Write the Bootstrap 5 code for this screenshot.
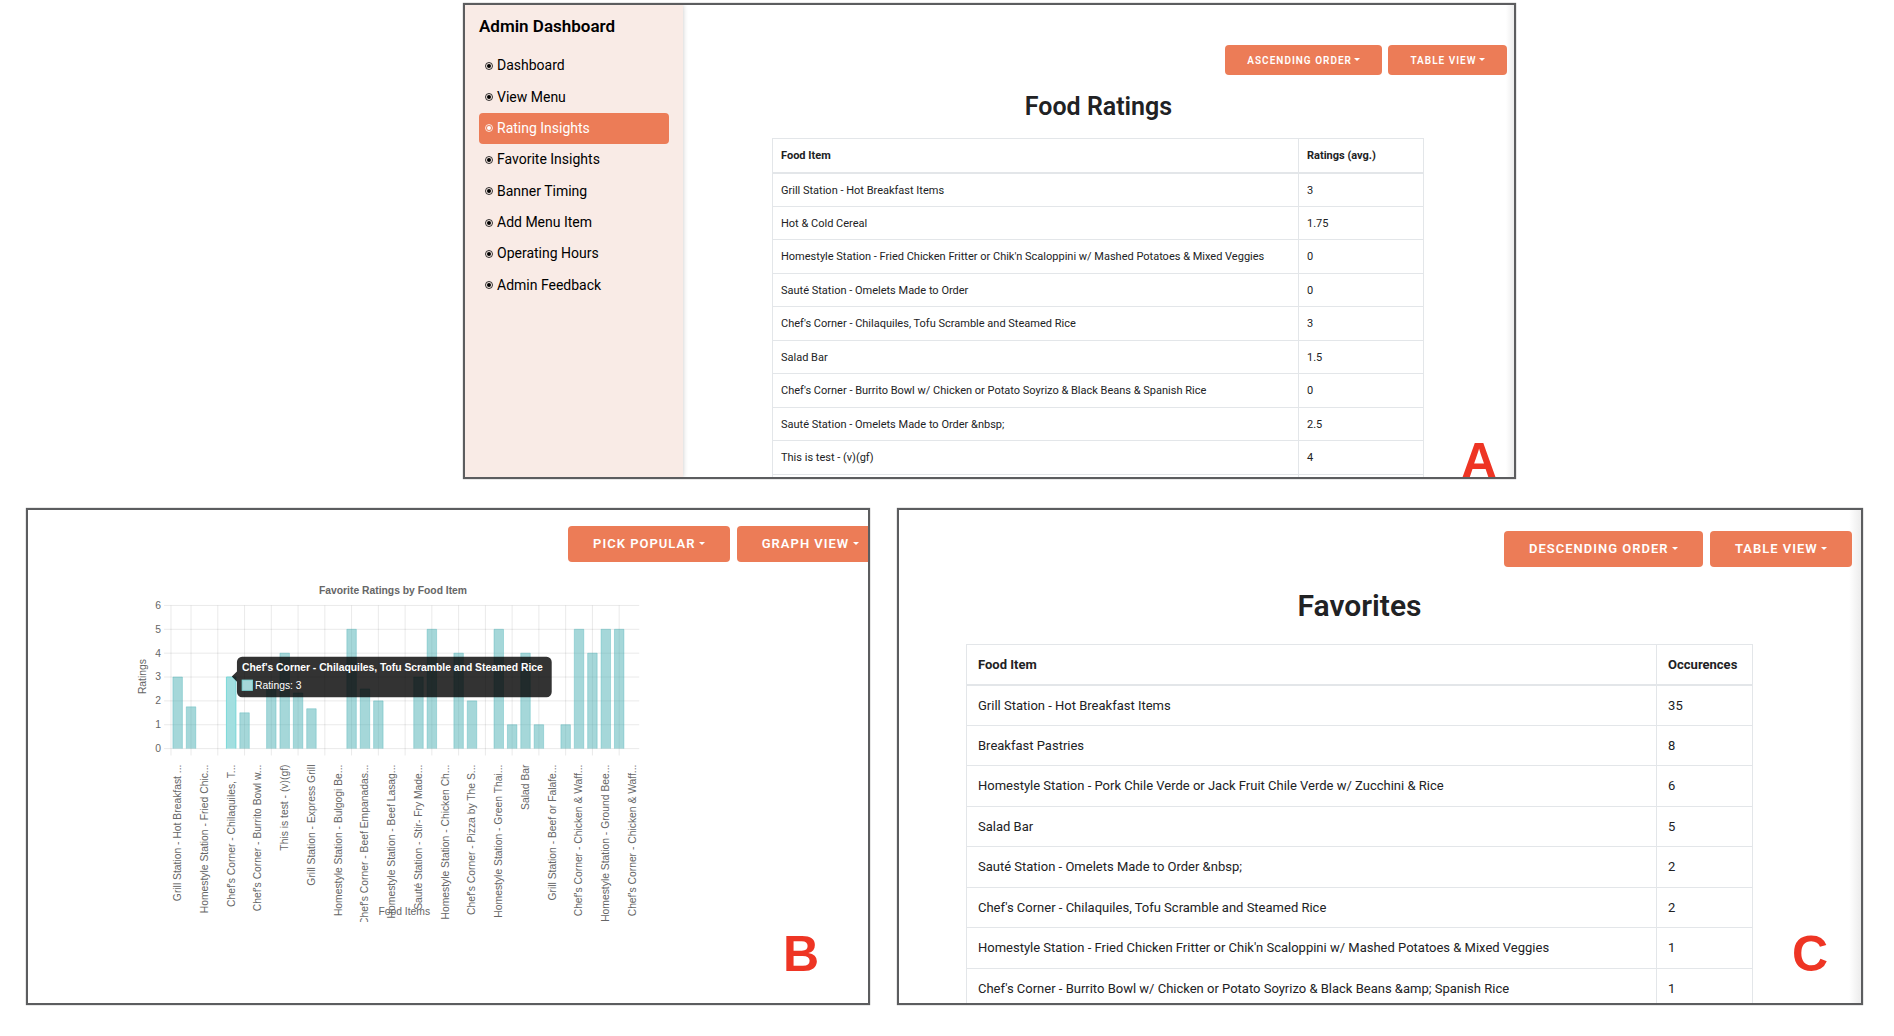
<!DOCTYPE html>
<html lang="en">
<head>
<meta charset="utf-8">
<meta name="viewport" content="width=device-width, initial-scale=1">
<title>Admin Dashboard</title>
<link href="https://cdn.jsdelivr.net/npm/bootstrap@5.3.0/dist/css/bootstrap.min.css" rel="stylesheet">
<style>
  :root { --coral: #ec7c57; --ink: #212224; --rule: #e3e6e9; }
  body { font-family: Roboto, "Liberation Sans", sans-serif; color: var(--ink); background: #fff; }
  .board { padding-top: 3px; padding-bottom: 31px; }
  .board-top { display: grid; grid-template-columns: 463fr 1053fr 378fr; }
  .board-top > .shot { grid-column: 2; height: 476px; }
  .board-bottom { display: grid; grid-template-columns: 26fr 844fr 27fr 966fr 31fr; margin-top: 29px; }
  .board-bottom > .shot { height: 497px; }
  .board-bottom > .shot-graph { grid-column: 2; }
  .board-bottom > .shot-favorites { grid-column: 4; }
  .shot { position: relative; overflow: hidden; border: 2px solid #5c5d5f; box-shadow: 0 0 1px #777; background: #fff; }
  .shot-letter { position: absolute; font: bold 50px/50px "Liberation Sans", sans-serif; color: #ee3524; }
  .letter-a { right: 17px; top: 431px; }
  .letter-b { right: 49px; bottom: 24px; }
  .letter-c { right: 33px; bottom: 24px; }

  .side { flex: 0 0 218px; padding: 11px 14px; background: #f9ebe6; box-shadow: 0 0 5px rgba(0,0,0,.22); z-index: 1; }
  .side h1 { font-size: 17px; line-height: 20px; font-weight: 600; color: #000; margin: 0 0 14px; white-space: nowrap; }
  .side ul { height: 251px; }
  .side .nav-link { display: flex; align-items: center; gap: 4px; padding: 0 6px; font-size: 14px; color: #000; border-radius: 4px; }
  .side .nav-link.active { background: var(--coral); color: #fff; }
  .side svg { width: 8px; height: 8px; flex: none; }

  .btn-coral { --bs-btn-color: #fff; --bs-btn-bg: var(--coral); --bs-btn-hover-color: #fff; --bs-btn-hover-bg: #e06c46;
    --bs-btn-active-color: #fff; --bs-btn-active-bg: #d9633c; border: 0; border-radius: 4px; font-weight: 600;
    letter-spacing: 1px; text-transform: uppercase; white-space: nowrap; }
  .btn-small { padding: 0 22px; height: 30px; font-size: 10px; }
  .btn-large { padding: 0 25px; height: 36px; font-size: 13px; }

  .report-title { text-align: center; font-weight: 600; }
  .report { width: 100%; margin: 0; color: var(--ink); border-color: var(--rule); table-layout: fixed; white-space: nowrap; }
  .report > :not(caption) > * > * { padding-top: 0; padding-bottom: 0; vertical-align: middle; }
  .report thead { border-bottom: 2px solid var(--rule); }

  .ratings-main { flex: 1 1 0; min-width: 0; padding-top: 40px; background: linear-gradient(to left, #ececec, #fff 8px); }
  .ratings-main .toolbar { padding-right: 7px; }
  .ratings-main .report-wrap { padding: 0 90px 0 89px; }
  .ratings-main .report-title { font-size: 25px; line-height: 31px; margin: 16px 0; }
  .report-ratings { font-size: 11px; }
  .report-ratings tr { height: 34px; }
  .report-ratings tbody tr:nth-child(even) { height: 33px; }
  .report-ratings th:last-child { width: 19.2%; }
  .report-ratings > :not(caption) > * > * { padding: 2px 8px 0; }

  .shot-favorites { padding-top: 21px; background: linear-gradient(to left, #ececec, #fff 12px); }
  .shot-favorites .toolbar { padding-right: 9px; }
  .shot-favorites .report-wrap { padding: 0 108px 0 67px; }
  .shot-favorites .report-title { font-size: 30px; line-height: 37px; margin: 20px 0; }
  .report-favorites { font-size: 13px; }
  .report-favorites tr { height: 41px; }
  .report-favorites thead tr, .report-favorites tbody tr:nth-child(even) { height: 40px; }
  .report-favorites th:last-child { width: 12.2%; }
  .report-favorites > :not(caption) > * > * { padding-left: 11px; padding-right: 10px; }

  .shot-graph { padding-top: 16px; }
  .shot-graph .toolbar { margin-left: 64.3%; }
  .chart { display: block; width: 61.6%; margin: 18px 0 0 12.1%; overflow: hidden; font: 12px "Liberation Sans", sans-serif; fill: #666; }
  .chart .strong { font-weight: bold; }
  .chart .grid { stroke: rgba(0,0,0,.1); stroke-width: 1; }
  .chart .bar { fill: rgba(75,176,180,.5); }
  .chart .bar-edge { stroke: rgba(75,180,184,.45); stroke-width: 1; fill: none; }
  .chart .hot { fill: #a2dfe0; }
  .chart .hot-edge { stroke: #6cd5d5; }
  .chart .tip { fill: rgba(0,0,0,.8); }
  .chart .tip-text { fill: #fff; }
</style>
</head>
<body>
<main class="board">
  <div class="board-top">
    <section class="shot d-flex" aria-label="Food Ratings table">
      <aside class="side">
        <h1>Admin Dashboard</h1>
        <ul class="nav flex-column flex-nowrap" id="menu"></ul>
      </aside>
      <div class="ratings-main">
        <div class="toolbar d-flex justify-content-end" style="gap:6px">
          <button type="button" class="btn btn-coral btn-small dropdown-toggle">Ascending Order</button>
          <button type="button" class="btn btn-coral btn-small dropdown-toggle">Table View</button>
        </div>
        <h2 class="report-title">Food Ratings</h2>
        <div class="report-wrap">
          <table class="table table-bordered report report-ratings">
            <thead><tr><th scope="col">Food Item</th><th scope="col">Ratings (avg.)</th></tr></thead>
            <tbody>
              <tr><td>Grill Station - Hot Breakfast Items</td><td>3</td></tr>
              <tr><td>Hot &amp; Cold Cereal</td><td>1.75</td></tr>
              <tr><td>Homestyle Station - Fried Chicken Fritter or Chik'n Scaloppini w/ Mashed Potatoes &amp; Mixed Veggies</td><td>0</td></tr>
              <tr><td>Sauté Station - Omelets Made to Order</td><td>0</td></tr>
              <tr><td>Chef's Corner - Chilaquiles, Tofu Scramble and Steamed Rice</td><td>3</td></tr>
              <tr><td>Salad Bar</td><td>1.5</td></tr>
              <tr><td>Chef's Corner - Burrito Bowl w/ Chicken or Potato Soyrizo &amp; Black Beans &amp; Spanish Rice</td><td>0</td></tr>
              <tr><td>Sauté Station - Omelets Made to Order &amp;nbsp;</td><td>2.5</td></tr>
              <tr><td>This is test - (v)(gf)</td><td>4</td></tr>
              <tr><td></td><td></td></tr>
            </tbody>
          </table>
        </div>
      </div>
      <span class="shot-letter letter-a">A</span>
    </section>
  </div>

  <div class="board-bottom">
    <section class="shot shot-graph" aria-label="Favorite ratings graph">
      <div class="toolbar d-flex flex-nowrap" style="gap:7px">
        <button type="button" class="btn btn-coral btn-large dropdown-toggle">Pick Popular</button>
        <button type="button" class="btn btn-coral btn-large dropdown-toggle">Graph View</button>
      </div>
      <svg class="chart" id="chart" viewBox="0 0 600 396" role="img" aria-label="Favorite Ratings by Food Item"></svg>
      <span class="shot-letter letter-b">B</span>
    </section>

    <section class="shot shot-favorites" aria-label="Favorites table">
      <div class="toolbar d-flex justify-content-end" style="gap:7px">
        <button type="button" class="btn btn-coral btn-large dropdown-toggle">Descending Order</button>
        <button type="button" class="btn btn-coral btn-large dropdown-toggle">Table View</button>
      </div>
      <div class="report-wrap">
        <h2 class="report-title">Favorites</h2>
        <table class="table table-bordered report report-favorites">
          <thead><tr><th scope="col">Food Item</th><th scope="col">Occurences</th></tr></thead>
          <tbody>
            <tr><td>Grill Station - Hot Breakfast Items</td><td>35</td></tr>
            <tr><td>Breakfast Pastries</td><td>8</td></tr>
            <tr><td>Homestyle Station - Pork Chile Verde or Jack Fruit Chile Verde w/ Zucchini &amp; Rice</td><td>6</td></tr>
            <tr><td>Salad Bar</td><td>5</td></tr>
            <tr><td>Sauté Station - Omelets Made to Order &amp;nbsp;</td><td>2</td></tr>
            <tr><td>Chef's Corner - Chilaquiles, Tofu Scramble and Steamed Rice</td><td>2</td></tr>
            <tr><td>Homestyle Station - Fried Chicken Fritter or Chik'n Scaloppini w/ Mashed Potatoes &amp; Mixed Veggies</td><td>1</td></tr>
            <tr><td>Chef's Corner - Burrito Bowl w/ Chicken or Potato Soyrizo &amp; Black Beans &amp;amp; Spanish Rice</td><td>1</td></tr>
          </tbody>
        </table>
      </div>
      <span class="shot-letter letter-c">C</span>
    </section>
  </div>
</main>
<script src="https://cdn.jsdelivr.net/npm/bootstrap@5.3.0/dist/js/bootstrap.bundle.min.js"></script>
<script>
  // Sidebar entries
  const pages = ["Dashboard", "View Menu", "Rating Insights", "Favorite Insights", "Banner Timing", "Add Menu Item", "Operating Hours", "Admin Feedback"];
  document.getElementById("menu").innerHTML = pages.map(p =>
    `<li class="nav-item flex-fill d-flex"><a href="#" class="nav-link flex-fill${p === "Rating Insights" ? " active" : ""}">` +
    `<svg viewBox="0 0 16 16" aria-hidden="true"><circle cx="8" cy="8" r="7" fill="none" stroke="currentColor" stroke-width="1.6"/><circle cx="8" cy="8" r="4" fill="currentColor"/></svg>${p}</a></li>`).join("");

  // Bar chart: 35 categories, every second one labelled
  const left = 47.5, right = 590.5, top0 = 29.5, base = 195.5, step = (right - left) / 35, unit = (base - top0) / 6;
  const values = [3,1.75,0,0,3,1.5,0,2.5,4,2.33,1.67,0,0,5,2.5,2,0,0,3,5,0,4,2,0,5,1,4,1,0,1,5,4,5,5,0];
  const labels = ["Grill Station - Hot Breakfast ...", "Homestyle Station - Fried Chic...", "Chef's Corner - Chilaquiles, T...", "Chef's Corner - Burrito Bowl w...",
    "This is test - (v)(gf)", "Grill Station - Express Grill", "Homestyle Station - Bulgogi Be...", "Chef's Corner - Beef Empanadas...", "Homestyle Station - Beef Lasag...",
    "Sauté Station - Stir- Fry Made...", "Homestyle Station - Chicken Ch...", "Chef's Corner - Pizza by The S...", "Homestyle Station - Green Thai...", "Salad Bar",
    "Grill Station - Beef or Falafe...", "Chef's Corner - Chicken & Waff...", "Homestyle Station - Ground Bee...", "Chef's Corner - Chicken & Waff..."];
  const hovered = 4, mid = i => left + step * (i + .5);
  let g = `<text class="strong" x="305" y="16" text-anchor="middle">Favorite Ratings by Food Item</text>`;
  for (let v = 0; v <= 6; v++) {
    const y = base - v * unit;
    g += `<path class="grid" d="M${left - 8} ${y}H${right}"/><text x="36" y="${y + 4}" text-anchor="end">${v}</text>`;
  }
  g += `<path class="grid" d="M${left} ${top0}V${base + 8}"/>`;
  for (let i = 1; i < 35; i += 2) g += `<path class="grid" d="M${mid(i)} ${top0}V${base + 8}"/>`;
  values.forEach((v, i) => {
    if (!v) return;
    const x = mid(i) - 5.5, y = base - v * unit, hot = i === hovered;
    g += `<rect class="${hot ? "hot" : "bar"}" x="${x}" y="${y}" width="11" height="${base - y}"/>` +
         `<path class="bar-edge ${hot ? "hot-edge" : ""}" d="M${x} ${base}V${y}H${x + 11}V${base}"/>`;
  });
  labels.forEach((t, k) => {
    g += `<text transform="translate(${mid(2 * k) + 4} 214) rotate(-90)" text-anchor="end">${t.replace("&", "&amp;")}</text>`;
  });
  g += `<text transform="translate(19 112) rotate(-90)" text-anchor="middle">Ratings</text>
    <text x="318" y="388" text-anchor="middle">Food Items</text>
    <path class="tip" d="M130 89H483a6 6 0 0 1 6 6V130a6 6 0 0 1-6 6H130a6 6 0 0 1-6-6V118l-6-6l6-6V95a6 6 0 0 1 6-6z"/>
    <text class="tip-text strong" x="130" y="106">Chef's Corner - Chilaquiles, Tofu Scramble and Steamed Rice</text>
    <rect x="130" y="116" width="12" height="12" fill="#a5d6d8" stroke="#7cd3d3"/>
    <text class="tip-text" x="145" y="126">Ratings: 3</text>`;
  document.getElementById("chart").innerHTML = g;
</script>
</body>
</html>
